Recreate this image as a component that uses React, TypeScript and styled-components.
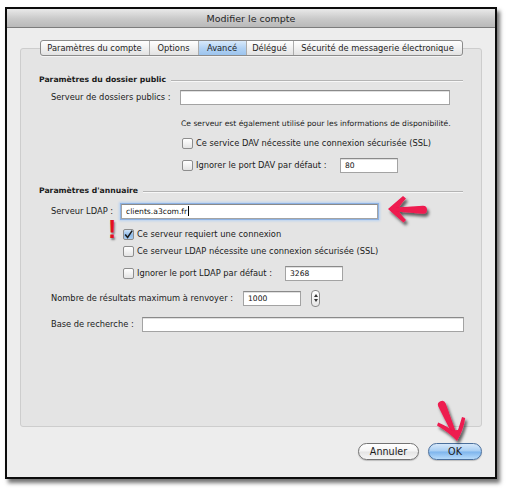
import React from "react";
import styled, { createGlobalStyle } from "styled-components";

const GlobalStyle = createGlobalStyle`
  html, body {
    margin: 0;
    padding: 0;
    background: #fff;
  }
  body {
    font-family: "DejaVu Sans", "Noto Sans", sans-serif;
    color: #1b1b1b;
  }
`;

const Page = styled.div`
  position: relative;
  width: 506px;
  height: 488px;
  padding: 7px 0 0 5px;
  box-sizing: border-box;
  overflow: hidden;
`;

const Window = styled.div`
  width: 492px;
  height: 472px;
  box-sizing: border-box;
  border: 2px solid #0c0c0c;
  background: #ededed;
  box-shadow: 3px 4px 4px rgba(0, 0, 0, 0.55);
  display: flex;
  flex-direction: column;
`;

const TitleBar = styled.div`
  height: 19px;
  box-sizing: border-box;
  border-bottom: 1px solid #7c7c7c;
  background: linear-gradient(#e9e9e9, #c9c9c9 55%, #b9b9b9);
  display: flex;
  align-items: center;
  justify-content: center;
  font-size: 9.5px;
  color: #262626;
`;

const Body = styled.div`
  flex: 1;
  display: flex;
  flex-direction: column;
  padding: 20px 13px 0 13px;
`;

const Panel = styled.div`
  height: 379px;
  box-sizing: border-box;
  border: 1px solid #cdcdcd;
  border-radius: 3px;
  background: #e4e4e4;
  display: flex;
  flex-direction: column;
  padding: 0 18px 0 0;
`;

const TabStrip = styled.div`
  align-self: center;
  margin: -9px 0 0 18px;
  height: 14px;
  display: flex;
  border: 1px solid #8b8b8b;
  border-radius: 3px;
  overflow: hidden;
  background: linear-gradient(#ffffff, #f1f1f1 50%, #e2e2e2);
  box-shadow: 0 1px 0 rgba(255, 255, 255, 0.6);
`;

const Tab = styled.div<{ $w: number; $active?: boolean }>`
  width: ${(p) => p.$w}px;
  display: flex;
  align-items: center;
  justify-content: center;
  font-size: 8.3px;
  color: #1e1e1e;
  border-left: 1px solid #acacac;
  background: ${(p) =>
    p.$active ? "linear-gradient(#d9eafb, #b3d3f4 50%, #9cc4ee)" : "transparent"};
  &:first-child {
    border-left: none;
  }
`;

const Row = styled.div<{ $mt: number; $indent: number; $small?: boolean }>`
  height: 16px;
  margin-top: ${(p) => p.$mt}px;
  padding-left: ${(p) => p.$indent}px;
  display: flex;
  align-items: center;
  font-size: ${(p) => (p.$small ? 7.6 : 8.3)}px;
  white-space: nowrap;
`;

const SectionTitle = styled.span`
  font-weight: bold;
  font-size: 7.7px;
  margin-right: 5px;
`;

const Rule = styled.div`
  flex: 1;
  height: 1px;
  margin-top: 3px;
  background: #b4b4b4;
  box-shadow: 0 1px 0 #f7f7f7;
`;

const Label = styled.span<{ $w: number }>`
  width: ${(p) => p.$w}px;
  flex: none;
`;

const Field = styled.div<{ $w: number; $focus?: boolean }>`
  width: ${(p) => p.$w}px;
  height: 15px;
  box-sizing: border-box;
  flex: none;
  background: #fff;
  border: 1px solid #a3a3a3;
  border-top-color: #8a8a8a;
  padding: 0 4px;
  display: flex;
  align-items: center;
  font-size: 7.6px;
  color: #111;
  box-shadow: ${(p) =>
    p.$focus ? "0 0 0 1px #8db2e3, 0 0 2px 2px #b9d2f1" : "inset 0 1px 0 #e0e0e0"};
`;

const Caret = styled.span`
  display: inline-block;
  width: 1px;
  height: 10px;
  background: #000;
  margin-left: 1px;
`;

const Box = styled.span<{ $checked?: boolean }>`
  width: 11px;
  height: 11px;
  box-sizing: border-box;
  flex: none;
  border: 1px solid #8d8d8d;
  border-radius: 2px;
  margin-right: 3px;
  display: flex;
  align-items: center;
  justify-content: center;
  background: ${(p) =>
    p.$checked
      ? "linear-gradient(#cfe3f7, #8fbbea 55%, #a9cdf1)"
      : "linear-gradient(#ffffff, #f2f2f2 50%, #e3e3e3)"};
`;

const CheckText = styled.span<{ $w?: number }>`
  width: ${(p) => (p.$w ? `${p.$w}px` : "auto")};
  flex: none;
`;

const Stepper = styled.div`
  width: 9px;
  height: 17px;
  box-sizing: border-box;
  margin-left: 10px;
  border: 1px solid #8a8a8a;
  border-radius: 4px;
  background: linear-gradient(#ffffff, #e6e6e6);
  display: flex;
  flex-direction: column;
  align-items: center;
  justify-content: space-around;
  padding: 2px 0;
`;

const Tri = styled.span<{ $up?: boolean }>`
  width: 0;
  height: 0;
  border-left: 2px solid transparent;
  border-right: 2px solid transparent;
  ${(p) => (p.$up ? "border-bottom: 3px solid #333;" : "border-top: 3px solid #333;")}
`;

const Footer = styled.div`
  display: flex;
  justify-content: flex-end;
  gap: 9px;
  margin-top: 16px;
`;

const Button = styled.div<{ $w: number; $primary?: boolean }>`
  width: ${(p) => p.$w}px;
  height: 17px;
  box-sizing: border-box;
  border-radius: 9px;
  border: 1px solid ${(p) => (p.$primary ? "#4a6f9c" : "#737373")};
  background: ${(p) =>
    p.$primary
      ? "linear-gradient(#d6e8fa, #a6cdf3 48%, #7db4ec 52%, #b7dbfb)"
      : "linear-gradient(#ffffff, #f4f4f4 48%, #e4e4e4 52%, #f6f6f6)"};
  display: flex;
  align-items: center;
  justify-content: center;
  font-size: 9.6px;
  color: #1a1a1a;
  box-shadow: 0 1px 1px rgba(0, 0, 0, 0.2);
`;

const Annotation = styled.svg<{ $x: number; $y: number }>`
  position: absolute;
  left: ${(p) => p.$x}px;
  top: ${(p) => p.$y}px;
  overflow: visible;
`;

const Bang = styled.span`
  position: absolute;
  left: 108px;
  top: 217px;
  font-family: "Liberation Sans", Arial, sans-serif;
  font-weight: bold;
  font-size: 25px;
  line-height: 25px;
  color: #e3101f;
  text-shadow: 1px 2px 2px rgba(0, 0, 0, 0.45);
`;

const Shadow = ({ id }: { id: string }) => (
  <defs>
    <filter id={id} x="-30%" y="-30%" width="160%" height="160%">
      <feDropShadow dx="2" dy="3" stdDeviation="1.4" floodColor="#000" floodOpacity="0.6" />
    </filter>
  </defs>
);

const LeftArrow = () => (
  <Annotation $x={382} $y={192} width={50} height={34} viewBox="0 0 50 34">
    <Shadow id="shL" />
    <g fill="#ee1a4f" filter="url(#shL)">
      <path d="M6,17 Q14,10 21,4 L24,6.5 Q19,12 17.5,15 L17.5,20 Q19,23 24,28 L21.5,30.5 Q14,24 6,17 Z" />
      <path d="M14,15.5 L41,13.8 A4,4 0 0 1 41,21.8 L14,19.5 Z" />
    </g>
  </Annotation>
);

const DownArrow = () => (
  <Annotation $x={428} $y={398} width={44} height={50} viewBox="0 0 44 50">
    <Shadow id="shD" />
    <g fill="#ee1a4f" filter="url(#shD)">
      <path d="M10.3,8.6 A4,4 0 0 1 17.7,5.4 L28.2,35 L24.4,36.6 Z" />
      <path d="M29,43 Q22,35 9,27.5 L10.2,24.6 Q20,29 24.5,32.5 L30,32 Q32,26 34,19 L37.2,20 Q35.5,32 29,43 Z" />
    </g>
  </Annotation>
);

const Check = () => (
  <svg width="9" height="9" viewBox="0 0 9 9">
    <path d="M1.2,4.6 L3.6,7.4 L8.2,0.6" fill="none" stroke="#1a1a1a" strokeWidth="1.5" />
  </svg>
);

export default function App() {
  return (
    <>
      <GlobalStyle />
      <Page>
        <Window>
          <TitleBar>Modifier le compte</TitleBar>
          <Body>
            <Panel>
              <TabStrip>
                <Tab $w={108}>Paramètres du compte</Tab>
                <Tab $w={48}>Options</Tab>
                <Tab $w={47} $active>
                  Avancé
                </Tab>
                <Tab $w={46}>Délégué</Tab>
                <Tab $w={168}>Sécurité de messagerie électronique</Tab>
              </TabStrip>

              <Row $mt={15} $indent={18}>
                <SectionTitle>Paramètres du dossier public</SectionTitle>
                <Rule />
              </Row>
              <Row $mt={2} $indent={30}>
                <Label $w={129}>Serveur de dossiers publics :</Label>
                <Field $w={270} />
              </Row>
              <Row $mt={10} $indent={160} $small>
                Ce serveur est également utilisé pour les informations de disponibilité.
              </Row>
              <Row $mt={4} $indent={161}>
                <Box />
                <CheckText>Ce service DAV nécessite une connexion sécurisée (SSL)</CheckText>
              </Row>
              <Row $mt={6} $indent={161}>
                <Box />
                <CheckText $w={144}>Ignorer le port DAV par défaut :</CheckText>
                <Field $w={58}>80</Field>
              </Row>

              <Row $mt={9} $indent={18}>
                <SectionTitle>Paramètres d'annuaire</SectionTitle>
                <Rule />
              </Row>
              <Row $mt={5} $indent={30}>
                <Label $w={70}>Serveur LDAP :</Label>
                <Field $w={257} $focus>
                  clients.a3com.fr
                  <Caret />
                </Field>
              </Row>
              <Row $mt={7} $indent={102}>
                <Box $checked>
                  <Check />
                </Box>
                <CheckText>Ce serveur requiert une connexion</CheckText>
              </Row>
              <Row $mt={1} $indent={102}>
                <Box />
                <CheckText>Ce serveur LDAP nécessite une connexion sécurisée (SSL)</CheckText>
              </Row>
              <Row $mt={6} $indent={102}>
                <Box />
                <CheckText $w={148}>Ignorer le port LDAP par défaut :</CheckText>
                <Field $w={58}>3268</Field>
              </Row>
              <Row $mt={9} $indent={30}>
                <Label $w={192}>Nombre de résultats maximum à renvoyer :</Label>
                <Field $w={58}>1000</Field>
                <Stepper>
                  <Tri $up />
                  <Tri />
                </Stepper>
              </Row>
              <Row $mt={10} $indent={30}>
                <Label $w={91}>Base de recherche :</Label>
                <Field $w={322} />
              </Row>
            </Panel>
            <Footer>
              <Button $w={61}>Annuler</Button>
              <Button $w={54} $primary>
                OK
              </Button>
            </Footer>
          </Body>
        </Window>
        <LeftArrow />
        <DownArrow />
        <Bang>!</Bang>
      </Page>
    </>
  );
}
